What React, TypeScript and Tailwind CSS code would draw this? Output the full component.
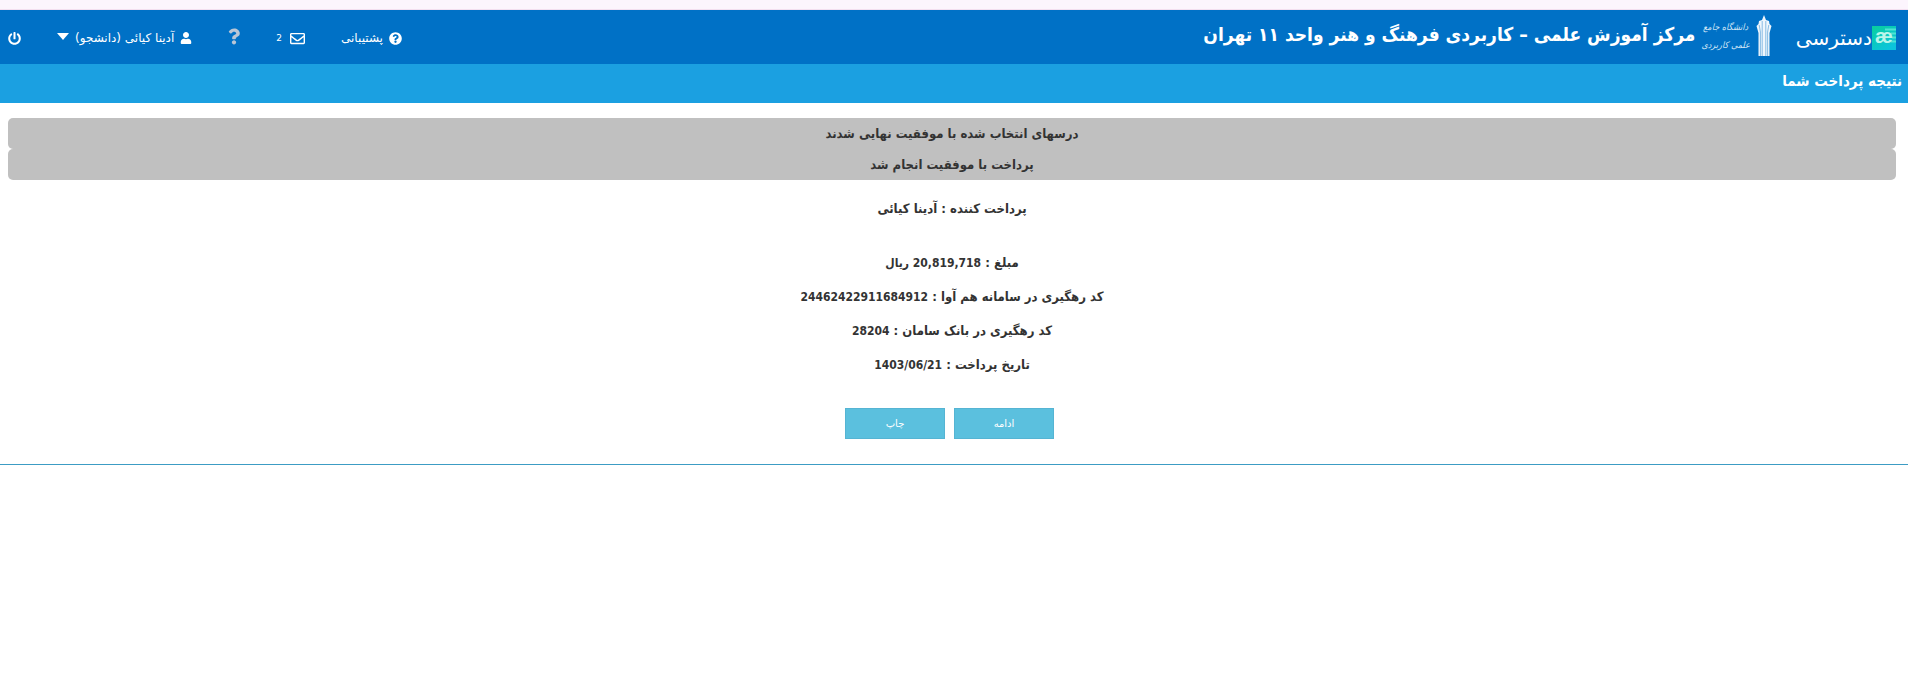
import { FaPowerOff, FaUser, FaQuestion, FaQuestionCircle, FaRegEnvelope } from "react-icons/fa";

const notices = ["درسهای انتخاب شده با موفقیت نهایی شدند", "پرداخت با موفقیت انجام شد"];

const details = [
  { label: "مبلغ", value: "20,819,718 ریال" },
  { label: "کد رهگیری در سامانه هم آوا", value: "24462422911684912" },
  { label: "کد رهگیری در بانک سامان", value: "28204" },
  { label: "تاریخ پرداخت", value: "1403/06/21" },
];

function UniversityMark() {
  return (
    <svg width="16" height="42" viewBox="0 0 16 42" aria-hidden="true">
      <path
        d="M8 0 L10 5 L13 6 L13.5 9 L15.5 11 L13.5 18 V41 H2.5 V18 L0.5 11 L2.5 9 L3 6 L6 5 Z"
        fill="#eef6fc"
      />
      <path
        d="M6.2 6 V41 M9.8 6 V41 M3.2 10 L4.4 17 V41 M12.8 10 L11.6 17 V41"
        stroke="#5ba3da"
        strokeWidth="0.7"
        fill="none"
      />
    </svg>
  );
}

function AccessMark() {
  return (
    <svg width="24" height="24" viewBox="0 0 24 24" aria-hidden="true">
      <defs>
        <linearGradient id="access" x1="0" y1="0" x2="0.6" y2="1">
          <stop offset="0" stopColor="#08cf9c" />
          <stop offset="1" stopColor="#0cc4dc" />
        </linearGradient>
      </defs>
      <rect width="24" height="24" fill="url(#access)" />
      <path d="M13 3.5 H24 M19 7.5 H24 M20 11.5 H24 M19 15.5 H24" stroke="#4fe3d3" strokeWidth="2" />
      <text x="12" y="17" textAnchor="middle" direction="ltr" fontSize="20" fontWeight="700" fontFamily="Liberation Sans, sans-serif" fill="#b9f5ea">
        æ
      </text>
    </svg>
  );
}

function Caret() {
  return (
    <svg width="12" height="7" viewBox="0 0 12 7" className="mb-1" aria-hidden="true">
      <path d="M0 0 H12 L6 7 Z" fill="currentColor" />
    </svg>
  );
}

export default function App() {
  return (
    <div
      dir="rtl"
      className="min-h-screen bg-white font-['DejaVu_Sans_Condensed','DejaVu_Sans',sans-serif] text-[#333]"
    >
      <div className="h-[10px] border-b border-[#f3dff0] bg-[#fcf5fd]" />
      <header className="flex h-[54px] items-center justify-between bg-[#0071c6] pt-0.5 pr-3 pl-2 font-['DejaVu_Sans',sans-serif] text-white">
        <div className="flex items-center">
          <a href="#" className="flex items-center text-xl">
            <AccessMark />
            دسترسی
          </a>
          <div className="mr-6 flex items-center gap-1.5 pb-1">
            <UniversityMark />
            <span className="text-center font-['DejaVu_Sans_Condensed','DejaVu_Sans',sans-serif] text-[9px] leading-[18px] text-[#d5e8f7] italic">
              دانشگاه جامع
              <br />
              علمی کاربردی
            </span>
          </div>
          <h1 className="mr-1.5 pb-2 font-['DejaVu_Sans_Condensed','DejaVu_Sans',sans-serif] text-[19px] font-bold">
            مرکز آموزش علمی – کاربردی فرهنگ و هنر واحد ۱۱ تهران
          </h1>
        </div>
        <nav className="flex items-center gap-9 text-xs">
          <a href="#" className="flex items-center gap-1.5">
            <FaQuestionCircle size={13} />
            پشتیبانی
          </a>
          <a href="#" className="flex items-center gap-2">
            <FaRegEnvelope size={15} />
            <span className="text-[9px]">2</span>
          </a>
          <a href="#" aria-label="راهنما" className="pb-1 text-[#b9c6d6]">
            <FaQuestion className="h-[17px] w-3" />
          </a>
          <button type="button" className="flex items-center gap-1.5">
            <FaUser size={12} />
            آدینا کیائی (دانشجو)
            <Caret />
          </button>
          <button type="button" aria-label="خروج">
            <FaPowerOff size={13} />
          </button>
        </nav>
      </header>
      <h2 className="h-[39px] bg-[#1ba0e1] px-1.5 text-[15px] leading-[34px] font-bold text-white">نتیجه پرداخت شما</h2>
      <main className="border-b border-[#3c9cc4] pt-[15px] pr-3 pb-[25px] pl-2 text-center text-[13px] font-bold">
        {notices.map((n) => (
          <p key={n} className="rounded-[5px] bg-[#c0c0c0] leading-[31px]">
            {n}
          </p>
        ))}
        <p className="mt-3 mb-5 leading-[34px]">پرداخت کننده : آدینا کیائی</p>
        {details.map((d) => (
          <p key={d.label} className="leading-[34px]">
            {d.label} : <span className="text-xs">{d.value}</span>
          </p>
        ))}
        <div className="mt-[26px] flex justify-center gap-[9px] pr-[5px] font-['DejaVu_Sans',sans-serif] text-[10px] font-normal text-white">
          <button type="button" className="h-[31px] w-[100px] border border-[#55b4d3] bg-[#5bc0de]">
            ادامه
          </button>
          <button type="button" className="h-[31px] w-[100px] border border-[#55b4d3] bg-[#5bc0de]">
            چاپ
          </button>
        </div>
      </main>
    </div>
  );
}
